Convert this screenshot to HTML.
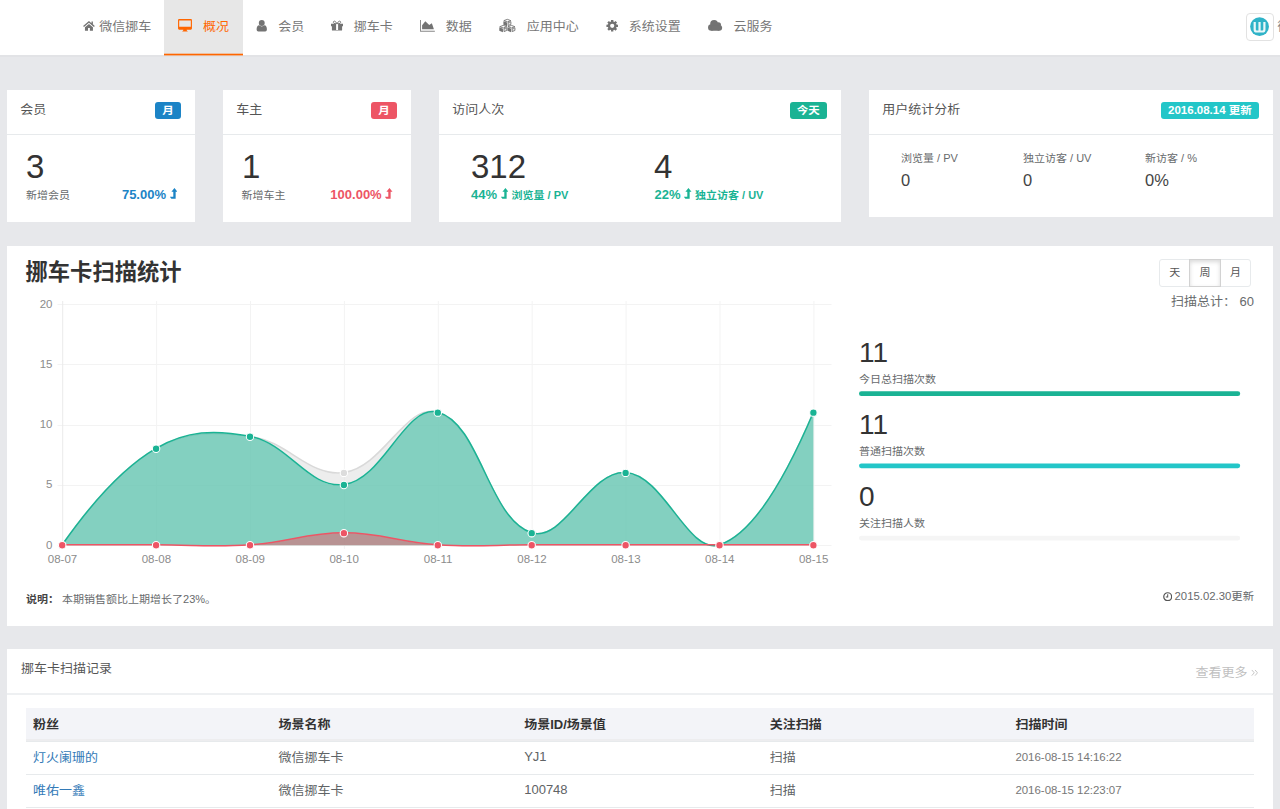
<!DOCTYPE html>
<html lang="zh-CN"><head><meta charset="utf-8"><title>微信挪车 - 概况</title>
<style>
*{box-sizing:border-box;margin:0;padding:0}
html,body{width:1280px;height:809px;overflow:hidden}
body{background:#e7e8eb;font-family:"Liberation Sans","Noto Sans CJK SC",sans-serif;font-size:13px;color:#676a6c;position:relative}
.abs{position:absolute;white-space:nowrap}
.ic{position:absolute;display:block}
#nav{position:absolute;left:0;top:0;width:1280px;height:57px;background:#fff;border-bottom:2px solid #e2e3e6}
#nav .act{position:absolute;left:164px;top:0;width:79px;height:55px;background:#e7e7e7}
#nav .t{position:absolute;top:13px;height:27px;line-height:27px;font-size:13px;color:#777;white-space:nowrap}
#nav .t.on{color:#ff6600}
.avatar{position:absolute;left:1246px;top:13px;width:28px;height:28px;border:1px solid #e2e2e2;border-radius:4px;background:#fff}
.card{position:absolute;background:#fff;top:90px}
.card .hd{position:absolute;left:0;top:0;right:0;height:45px;border-bottom:1px solid #e7eaec}
.card h5{position:absolute;left:13.3px;top:10px;height:19px;line-height:19px;font-size:13px;font-weight:normal;color:#555}
.badge{position:absolute;top:12px;right:14px;height:17px;line-height:17px;padding:0 7.2px;border-radius:3px;color:#fff;font-size:11.5px;font-weight:bold;white-space:nowrap}
.big{position:absolute;top:151px;height:32px;line-height:32px;font-size:33px;color:#333;white-space:nowrap}
.sm{position:absolute;top:188px;height:15px;line-height:15px;font-size:11px;white-space:nowrap}
.pct{position:absolute;top:187px;height:15px;line-height:15px;font-size:13px;font-weight:bold;white-space:nowrap}
.pct small{font-size:11px}
.lvl{display:inline-block;vertical-align:0.4px;margin:0 -0.3px 0 0}
.panel{position:absolute;left:7px;width:1266px;background:#fff}
.btn{position:absolute;top:259px;height:28px;line-height:25px;width:31.4px;border:1px solid #e7eaec;background:#fff;text-align:center;font-size:11px;color:#555}
.tick{position:absolute;font-size:11.5px;color:#8c8c8c;height:14px;line-height:14px;white-space:nowrap}
.stat .n{position:absolute;left:859px;font-size:28px;height:28px;line-height:28px;color:#333}
.stat .l{position:absolute;left:859px;font-size:11px;height:14px;line-height:14px;white-space:nowrap}
table{position:absolute;left:26px;top:708px;width:1228px;border-collapse:collapse;table-layout:fixed;font-size:13px}
th{background:linear-gradient(#f3f4f8,#f3f4f8 31.2px,#ededef 31.2px);text-align:left;font-weight:bold;color:#333;height:33px;padding:0 7px 2px;border-bottom:1px solid #e7eaec}
td{height:33px;padding:0 7px 2px;border-bottom:1px solid #e7eaec;color:#606365}
td a{color:#337ab7;text-decoration:none}
td small{font-size:11.45px;color:#777}
.z{display:inline-block;transform:scaleY(.92);transform-origin:50% 58%}
</style></head>
<body>
<div id="nav"><div class="act"><svg width="79" height="56" style="position:absolute;left:0;top:0"><rect x="0" y="53.7" width="79" height="1.7" fill="#ff6600"/></svg></div><a class="t" style="left:99.2px"><span class="z">微信挪车</span></a><a class="t on" style="left:203px"><span class="z">概况</span></a><a class="t" style="left:278.2px"><span class="z">会员</span></a><a class="t" style="left:353.7px"><span class="z">挪车卡</span></a><a class="t" style="left:445.7px"><span class="z">数据</span></a><a class="t" style="left:526.8px"><span class="z">应用中心</span></a><a class="t" style="left:628.7px"><span class="z">系统设置</span></a><a class="t" style="left:733.6px"><span class="z">云服务</span></a><svg class="ic" style="left:0;top:0" width="1280" height="56" viewBox="0 0 1280 56"><g transform="translate(83.1 21) scale(0.9750 1.0000)"><path fill="#737373" d="M6 0 L0 5 L0.9 6.05 L6 1.8 L11.1 6.05 L12 5 L10.05 3.35 V0.6 H8.6 V2.15 Z"/><path fill="#737373" d="M6 2.9 L1.9 6.3 V9.75 H5.05 V6.9 H6.95 V9.75 H10.1 V6.3 Z"/></g><g transform="translate(178.05 18.95)"><path fill="#ff6600" fill-rule="evenodd" d="M1.1 0 H12.8 Q13.9 0 13.9 1.1 V9.6 Q13.9 10.7 12.8 10.7 H8.6 L8.9 11.9 Q9.7 12 9.7 12.6 H4.2 Q4.2 12 5 11.9 L5.3 10.7 H1.1 Q0 10.7 0 9.6 V1.1 Q0 0 1.1 0 Z M1.15 1.5 V7.9 H12.75 V1.5 Z"/></g><g transform="translate(256.6 20.05)"><circle cx="5.15" cy="2.95" r="2.95" fill="#737373"/><path fill="#737373" d="M2.5 5.3 Q5.15 7.4 7.8 5.3 Q10.3 5.6 10.3 9.4 Q10.3 11.45 8.6 11.45 H1.7 Q0 11.45 0 9.4 Q0 5.6 2.5 5.3 Z"/></g><g transform="translate(331 20.6)"><path fill="#737373" d="M0 3.1 H5.1 V9.3 H7.1 V3.1 H12 V5.7 H11.1 V9.3 Q11.1 10 10.4 10 H1.6 Q0.9 10 0.9 9.3 V5.7 H0 Z"/><path fill="none" stroke="#737373" stroke-width="0.95" d="M5.9 3 Q4.6 0.4 3.3 0.5 Q2.2 0.7 2.4 1.9 Q2.6 3 4.2 3 Z M6.1 3 Q7.4 0.4 8.7 0.5 Q9.8 0.7 9.6 1.9 Q9.4 3 7.8 3 Z"/></g><g transform="translate(420.05 20.05)"><path fill="#737373" d="M0 0 H0.95 V10.6 H14.8 V11.6 H0 Z" opacity="0.85"/><path fill="#737373" d="M2.06 9.3 V5.1 L5.25 1.1 L9.2 5.06 L11.8 3.2 L13.7 8.6 V9.3 Z"/></g><g transform="translate(499.2 18.9)"><g transform="translate(4.1,0)"><path d="M4.05 0.45 L7.55 1.75 L4.05 3.05 L0.55 1.75 Z" fill="#fff" stroke="#737373" stroke-width="0.9" stroke-linejoin="round"/><path d="M0.1 2.3 L3.75 3.7 V7.3 L0.1 5.8 Z" fill="#737373"/><path d="M7.6 2.75 L4.8 3.85 V6.65 L7.6 5.5 Z" fill="#e4e4e4" stroke="#737373" stroke-width="0.85" stroke-linejoin="round"/></g><g transform="translate(0,6.05)"><path d="M4.05 0.45 L7.55 1.75 L4.05 3.05 L0.55 1.75 Z" fill="#fff" stroke="#737373" stroke-width="0.9" stroke-linejoin="round"/><path d="M0.1 2.3 L3.75 3.7 V7.3 L0.1 5.8 Z" fill="#737373"/><path d="M7.6 2.75 L4.8 3.85 V6.65 L7.6 5.5 Z" fill="#e4e4e4" stroke="#737373" stroke-width="0.85" stroke-linejoin="round"/></g><g transform="translate(8.15,6.05)"><path d="M4.05 0.45 L7.55 1.75 L4.05 3.05 L0.55 1.75 Z" fill="#fff" stroke="#737373" stroke-width="0.9" stroke-linejoin="round"/><path d="M0.1 2.3 L3.75 3.7 V7.3 L0.1 5.8 Z" fill="#737373"/><path d="M7.6 2.75 L4.8 3.85 V6.65 L7.6 5.5 Z" fill="#e4e4e4" stroke="#737373" stroke-width="0.85" stroke-linejoin="round"/></g></g><g transform="translate(606.2 19.8)"><path fill="#737373" fill-rule="evenodd" d="M10.29 4.81 L11.78 4.83 L11.78 7.17 L10.29 7.19 L9.87 8.19 L10.92 9.26 L9.26 10.92 L8.19 9.87 L7.19 10.29 L7.17 11.78 L4.83 11.78 L4.81 10.29 L3.81 9.87 L2.74 10.92 L1.08 9.26 L2.13 8.19 L1.71 7.19 L0.22 7.17 L0.22 4.83 L1.71 4.81 L2.13 3.81 L1.08 2.74 L2.74 1.08 L3.81 2.13 L4.81 1.71 L4.83 0.22 L7.17 0.22 L7.19 1.71 L8.19 2.13 L9.26 1.08 L10.92 2.74 L9.87 3.81 Z M8.1 6 A2.1 2.1 0 1 0 3.9 6 A2.1 2.1 0 1 0 8.1 6 Z"/></g><g transform="translate(708.05 20.05)"><g fill="#737373"><circle cx="3.2" cy="7.5" r="3.2"/><circle cx="6.05" cy="3.9" r="3.9"/><circle cx="10.4" cy="4.7" r="2.55"/><circle cx="11.2" cy="7.8" r="2.9"/><rect x="3.2" y="5" width="8" height="5.7"/></g></g></svg><div class="avatar"><svg width="26" height="26" viewBox="0 0 26 26" style="display:block"><circle cx="12.55" cy="12.6" r="9.4" fill="#2fb3c8"/><path d="M7.7 8 V15.4 Q7.7 17.5 9.8 17.5 H15.3 Q17.4 17.5 17.4 15.4 V8 M12.55 8 V17" fill="none" stroke="#eaf7f9" stroke-width="2.2"/></svg></div><a class="t" style="left:1277.5px;color:#888"><span class="z">微信挪车</span></a></div>
<div class="card" style="left:7px;width:188px;height:132px"><div class="hd"><h5><span class="z">会员</span></h5><span class="badge" style="background:#1c84c6"><span class="z">月</span></span></div></div><div class="big" style="left:26px">3</div><div class="sm" style="left:26px"><span class="z">新增会员</span></div><div class="pct" style="right:1103.2px;top:187px;color:#1c84c6">75.00% <svg class="lvl" width="7.5" height="10.7" viewBox="0 0 7.5 10.7"><path fill="currentColor" d="M4.45 0 L7.5 3.8 H5.65 V10.7 H1.4 L0 9 V8.75 H3.3 V3.8 H1.4 Z"/></svg></div><div class="card" style="left:223px;width:188px;height:132px"><div class="hd"><h5><span class="z">车主</span></h5><span class="badge" style="background:#ed5565"><span class="z">月</span></span></div></div><div class="big" style="left:242px">1</div><div class="sm" style="left:241.5px"><span class="z">新增车主</span></div><div class="pct" style="right:887.5px;top:187px;color:#ed5565">100.00% <svg class="lvl" width="7.5" height="10.7" viewBox="0 0 7.5 10.7"><path fill="currentColor" d="M4.45 0 L7.5 3.8 H5.65 V10.7 H1.4 L0 9 V8.75 H3.3 V3.8 H1.4 Z"/></svg></div><div class="card" style="left:439px;width:402px;height:132px"><div class="hd"><h5><span class="z">访问人次</span></h5><span class="badge" style="background:#1ab394"><span class="z">今天</span></span></div></div><div class="big" style="left:471px">312</div><div class="pct" style="left:471px;color:#1ab394">44% <svg class="lvl" width="7.5" height="10.7" viewBox="0 0 7.5 10.7"><path fill="currentColor" d="M4.45 0 L7.5 3.8 H5.65 V10.7 H1.4 L0 9 V8.75 H3.3 V3.8 H1.4 Z"/></svg> <small><span class="z">浏览量</span> / PV</small></div><div class="big" style="left:654px">4</div><div class="pct" style="left:654.5px;color:#1ab394">22% <svg class="lvl" width="7.5" height="10.7" viewBox="0 0 7.5 10.7"><path fill="currentColor" d="M4.45 0 L7.5 3.8 H5.65 V10.7 H1.4 L0 9 V8.75 H3.3 V3.8 H1.4 Z"/></svg> <small><span class="z">独立访客</span> / UV</small></div><div class="card" style="left:869px;width:404px;height:127px"><div class="hd"><h5><span class="z">用户统计分析</span></h5><span class="badge" style="background:#23c6c8">2016.08.14 <span class="z">更新</span></span></div></div><div class="sm" style="left:901px;top:151px"><span class="z">浏览量</span> / PV</div><div class="abs" style="left:901px;top:170px;height:20px;line-height:20px;font-size:16.5px;color:#444">0</div><div class="sm" style="left:1023px;top:151px"><span class="z">独立访客</span> / UV</div><div class="abs" style="left:1023px;top:170px;height:20px;line-height:20px;font-size:16.5px;color:#444">0</div><div class="sm" style="left:1145px;top:151px"><span class="z">新访客</span> / %</div><div class="abs" style="left:1145px;top:170px;height:20px;line-height:20px;font-size:16.5px;color:#444">0%</div>
<div class="panel" style="top:246px;height:380px"></div><div class="abs" style="left:25.5px;top:258px;height:30px;line-height:30px;font-size:22.3px;font-weight:bold;color:#333">挪车卡扫描统计</div><div class="btn" style="left:1159px;border-radius:3px 0 0 3px"><span class="z">天</span></div><div class="btn" style="left:1189.4px;border-color:#d2d2d2;box-shadow:inset 0 2px 4px rgba(0,0,0,.15);z-index:2"><span class="z">周</span></div><div class="btn" style="left:1219.8px;border-radius:0 3px 3px 0"><span class="z">月</span></div><div class="abs" style="right:26px;top:294px;height:16px;line-height:16px;font-size:13px"><span class="z">扫描总计：</span> 60</div><svg class="abs" style="left:0;top:0" width="1280" height="809" viewBox="0 0 1280 809"><line x1="57.5" y1="545.5" x2="831.5" y2="545.5" stroke="#f3f3f3" stroke-width="1"/><line x1="57.5" y1="485.5" x2="831.5" y2="485.5" stroke="#f3f3f3" stroke-width="1"/><line x1="57.5" y1="425.5" x2="831.5" y2="425.5" stroke="#f3f3f3" stroke-width="1"/><line x1="57.5" y1="364.5" x2="831.5" y2="364.5" stroke="#f3f3f3" stroke-width="1"/><line x1="57.5" y1="304.5" x2="831.5" y2="304.5" stroke="#f3f3f3" stroke-width="1"/><line x1="62.7" y1="301" x2="62.7" y2="549" stroke="#ebebeb" stroke-width="1"/><line x1="156.6" y1="301" x2="156.6" y2="549" stroke="#f3f3f3" stroke-width="1"/><line x1="250.5" y1="301" x2="250.5" y2="549" stroke="#f3f3f3" stroke-width="1"/><line x1="344.4" y1="301" x2="344.4" y2="549" stroke="#f3f3f3" stroke-width="1"/><line x1="438.3" y1="301" x2="438.3" y2="549" stroke="#f3f3f3" stroke-width="1"/><line x1="532.2" y1="301" x2="532.2" y2="549" stroke="#f3f3f3" stroke-width="1"/><line x1="626.1" y1="301" x2="626.1" y2="549" stroke="#f3f3f3" stroke-width="1"/><line x1="720.0" y1="301" x2="720.0" y2="549" stroke="#f3f3f3" stroke-width="1"/><line x1="813.9" y1="301" x2="813.9" y2="549" stroke="#f3f3f3" stroke-width="1"/>
<path d="M62.2 545.2 Q112 474.27 156.1 448.8 C187.12 430.89 213.58 432.08 250 436.75 C288.7 441.72 308.28 477.47 343.9 472.9 C383.4 467.83 406.09 402.48 437.8 412.65 C481.21 426.58 488.29 519.22 531.7 533.15 C563.41 543.32 589.17 470.56 625.6 472.9 C664.29 475.38 687.81 555.37 719.5 545.2 Q762.93 531.27 813.4 412.65 L813.4 545.2 L62.2 545.2 Z" fill="#e4e4e4" fill-opacity="0.65" stroke="none"/>
<path d="M62.2 545.2 Q112 474.27 156.1 448.8 C187.12 430.89 213.58 432.08 250 436.75 C288.7 441.72 308.28 477.47 343.9 472.9 C383.4 467.83 406.09 402.48 437.8 412.65 C481.21 426.58 488.29 519.22 531.7 533.15 C563.41 543.32 589.17 470.56 625.6 472.9 C664.29 475.38 687.81 555.37 719.5 545.2 Q762.93 531.27 813.4 412.65" fill="none" stroke="#d9d9d9" stroke-width="1.5" transform="translate(0 -0.4)"/>
<circle cx="62.2" cy="545.2" r="3.7" fill="#dcdcdc" stroke="#fff" stroke-width="1.05"/><circle cx="156.1" cy="448.8" r="3.7" fill="#dcdcdc" stroke="#fff" stroke-width="1.05"/><circle cx="250" cy="436.75" r="3.7" fill="#dcdcdc" stroke="#fff" stroke-width="1.05"/><circle cx="343.9" cy="472.9" r="3.7" fill="#dcdcdc" stroke="#fff" stroke-width="1.05"/><circle cx="437.8" cy="412.65" r="3.7" fill="#dcdcdc" stroke="#fff" stroke-width="1.05"/><circle cx="531.7" cy="533.15" r="3.7" fill="#dcdcdc" stroke="#fff" stroke-width="1.05"/><circle cx="625.6" cy="472.9" r="3.7" fill="#dcdcdc" stroke="#fff" stroke-width="1.05"/><circle cx="719.5" cy="545.2" r="3.7" fill="#dcdcdc" stroke="#fff" stroke-width="1.05"/><circle cx="813.4" cy="412.65" r="3.7" fill="#dcdcdc" stroke="#fff" stroke-width="1.05"/>
<path d="M62.2 545.2 Q112 474.27 156.1 448.8 C187.12 430.89 214.48 429.91 250 436.75 C289.6 444.37 308.51 489.49 343.9 484.95 C383.63 479.85 404.98 404.23 437.8 412.65 C480.1 423.51 488.29 519.22 531.7 533.15 C563.41 543.32 589.17 470.56 625.6 472.9 C664.29 475.38 687.81 555.37 719.5 545.2 Q762.93 531.27 813.4 412.65 L813.4 545.2 L62.2 545.2 Z" fill="#1ab394" fill-opacity="0.5" stroke="none"/>
<path d="M62.2 545.2 Q112 474.27 156.1 448.8 C187.12 430.89 214.48 429.91 250 436.75 C289.6 444.37 308.51 489.49 343.9 484.95 C383.63 479.85 404.98 404.23 437.8 412.65 C480.1 423.51 488.29 519.22 531.7 533.15 C563.41 543.32 589.17 470.56 625.6 472.9 C664.29 475.38 687.81 555.37 719.5 545.2 Q762.93 531.27 813.4 412.65" fill="none" stroke="#1ab394" stroke-width="1.5" transform="translate(0 -0.4)"/>
<circle cx="62.2" cy="545.2" r="3.7" fill="#1ab394" stroke="#fff" stroke-width="1.05"/><circle cx="156.1" cy="448.8" r="3.7" fill="#1ab394" stroke="#fff" stroke-width="1.05"/><circle cx="250" cy="436.75" r="3.7" fill="#1ab394" stroke="#fff" stroke-width="1.05"/><circle cx="343.9" cy="484.95" r="3.7" fill="#1ab394" stroke="#fff" stroke-width="1.05"/><circle cx="437.8" cy="412.65" r="3.7" fill="#1ab394" stroke="#fff" stroke-width="1.05"/><circle cx="531.7" cy="533.15" r="3.7" fill="#1ab394" stroke="#fff" stroke-width="1.05"/><circle cx="625.6" cy="472.9" r="3.7" fill="#1ab394" stroke="#fff" stroke-width="1.05"/><circle cx="719.5" cy="545.2" r="3.7" fill="#1ab394" stroke="#fff" stroke-width="1.05"/><circle cx="813.4" cy="412.65" r="3.7" fill="#1ab394" stroke="#fff" stroke-width="1.05"/>
<path d="M62.2 545.2 Q118.54 545.2 156.1 545.2 C193.66 545.2 212.59 547.6 250 545.2 C287.71 542.78 306.34 533.15 343.9 533.15 C381.46 533.15 400.09 542.78 437.8 545.2 C475.21 547.6 494.14 545.2 531.7 545.2 C569.26 545.2 588.04 545.2 625.6 545.2 C663.16 545.2 681.94 545.2 719.5 545.2 Q757.06 545.2 813.4 545.2 L813.4 545.2 L62.2 545.2 Z" fill="#ed5565" fill-opacity="0.5" stroke="none"/>
<path d="M62.2 545.2 Q118.54 545.2 156.1 545.2 C193.66 545.2 212.59 547.6 250 545.2 C287.71 542.78 306.34 533.15 343.9 533.15 C381.46 533.15 400.09 542.78 437.8 545.2 C475.21 547.6 494.14 545.2 531.7 545.2 C569.26 545.2 588.04 545.2 625.6 545.2 C663.16 545.2 681.94 545.2 719.5 545.2 Q757.06 545.2 813.4 545.2" fill="none" stroke="#ed5565" stroke-width="1.5" transform="translate(0 -0.4)"/>
<circle cx="62.2" cy="545.2" r="3.7" fill="#ed5565" stroke="#fff" stroke-width="1.05"/><circle cx="156.1" cy="545.2" r="3.7" fill="#ed5565" stroke="#fff" stroke-width="1.05"/><circle cx="250" cy="545.2" r="3.7" fill="#ed5565" stroke="#fff" stroke-width="1.05"/><circle cx="343.9" cy="533.15" r="3.7" fill="#ed5565" stroke="#fff" stroke-width="1.05"/><circle cx="437.8" cy="545.2" r="3.7" fill="#ed5565" stroke="#fff" stroke-width="1.05"/><circle cx="531.7" cy="545.2" r="3.7" fill="#ed5565" stroke="#fff" stroke-width="1.05"/><circle cx="625.6" cy="545.2" r="3.7" fill="#ed5565" stroke="#fff" stroke-width="1.05"/><circle cx="719.5" cy="545.2" r="3.7" fill="#ed5565" stroke="#fff" stroke-width="1.05"/><circle cx="813.4" cy="545.2" r="3.7" fill="#ed5565" stroke="#fff" stroke-width="1.05"/>
</svg><div class="tick" style="right:1227.5px;top:537.6px;text-align:right">0</div><div class="tick" style="right:1227.5px;top:477.4px;text-align:right">5</div><div class="tick" style="right:1227.5px;top:417.1px;text-align:right">10</div><div class="tick" style="right:1227.5px;top:356.9px;text-align:right">15</div><div class="tick" style="right:1227.5px;top:296.6px;text-align:right">20</div><div class="tick" style="left:32.5px;width:60px;top:552px;text-align:center">08-07</div><div class="tick" style="left:126.4px;width:60px;top:552px;text-align:center">08-08</div><div class="tick" style="left:220.3px;width:60px;top:552px;text-align:center">08-09</div><div class="tick" style="left:314.2px;width:60px;top:552px;text-align:center">08-10</div><div class="tick" style="left:408.1px;width:60px;top:552px;text-align:center">08-11</div><div class="tick" style="left:502.0px;width:60px;top:552px;text-align:center">08-12</div><div class="tick" style="left:595.9px;width:60px;top:552px;text-align:center">08-13</div><div class="tick" style="left:689.8px;width:60px;top:552px;text-align:center">08-14</div><div class="tick" style="left:783.7px;width:60px;top:552px;text-align:center">08-15</div><div class="stat"><div class="n" style="top:338.5px">11</div><div class="l" style="top:372.0px"><span class="z">今日总扫描次数</span></div><div class="n" style="top:410.7px">11</div><div class="l" style="top:444.2px"><span class="z">普通扫描次数</span></div><div class="n" style="top:482.9px">0</div><div class="l" style="top:516.4px"><span class="z">关注扫描人数</span></div></div><svg class="abs" style="left:0;top:0" width="1280" height="809" viewBox="0 0 1280 809"><rect x="859" y="391.3" width="381.2" height="4.7" rx="2.35" fill="#1ab394"/><rect x="859" y="463.5" width="381.2" height="4.7" rx="2.35" fill="#23c6c8"/><rect x="859" y="535.7" width="381.2" height="4.7" rx="2.35" fill="#f5f5f5"/></svg><div class="abs" style="left:26px;top:592px;height:15px;line-height:15px;font-size:11px"><b style="color:#444"><span class="z">说明：</span></b> <span class="z">本期销售额比上期增长了</span>23%<span class="z">。</span></div><div class="abs" style="right:26px;top:589px;height:15px;line-height:15px;font-size:11.35px"><svg width="9.4" height="9.4" viewBox="0 0 20 20" style="vertical-align:-1px;margin-right:2.6px"><circle cx="10" cy="10" r="8.4" fill="none" stroke="#555" stroke-width="2.6"/><path d="M10 5 V10.6 H6" fill="none" stroke="#555" stroke-width="2.2"/></svg>2015.02.30<span class="z">更新</span></div>
<div class="panel" style="top:649px;height:170px"><div style="position:absolute;left:0;right:0;top:44px;height:1.5px;background:#eef0f2"></div></div><div class="abs" style="left:21px;top:659px;height:20px;line-height:20px;font-size:13px;color:#555"><span class="z">挪车卡扫描记录</span></div><div class="abs" style="right:21.59999999999991px;top:663px;height:20px;line-height:20px;font-size:13px;color:#c0c0c0"><span class="z">查看更多</span> <svg width="7.3" height="7.6" viewBox="0 0 18 18" style="vertical-align:0.2px"><path d="M2 2 L8 9 L2 16 M10 2 L16 9 L10 16" fill="none" stroke="#c4c4c4" stroke-width="2.4"/></svg></div><table><tr><th><span class="z">粉丝</span></th><th><span class="z">场景名称</span></th><th><span class="z">场景</span>ID/<span class="z">场景值</span></th><th><span class="z">关注扫描</span></th><th><span class="z">扫描时间</span></th></tr><tr><td><a><span class="z">灯火阑珊的</span></a></td><td><span class="z">微信挪车卡</span></td><td>YJ1</td><td><span class="z">扫描</span></td><td><small>2016-08-15 14:16:22</small></td></tr><tr><td><a><span class="z">唯佑一鑫</span></a></td><td><span class="z">微信挪车卡</span></td><td>100748</td><td><span class="z">扫描</span></td><td><small>2016-08-15 12:23:07</small></td></tr><tr><td><a><span class="z">唯佑一鑫</span></a></td><td><span class="z">微信挪车卡</span></td><td>100748</td><td><span class="z">扫描</span></td><td><small>2016-08-15 12:20:11</small></td></tr></table>
</body></html>
